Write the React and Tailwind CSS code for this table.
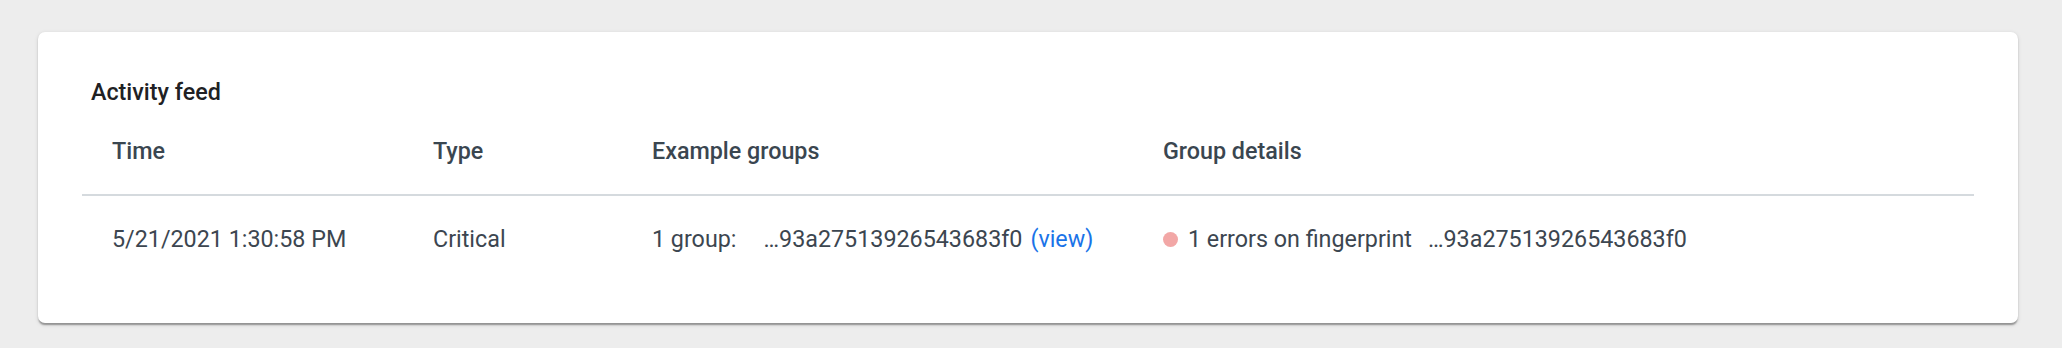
const rows = [
  {
    time: "5/21/2021 1:30:58 PM",
    type: "Critical",
    groups: "1 group:",
    hash: "…93a27513926543683f0",
    detail: "1 errors on fingerprint",
  },
];

export default function App() {
  return (
    <div className="min-h-screen bg-[#ededed] pl-[38px] pr-[44px] pt-[32px] font-['Roboto',sans-serif]">
      <div className="rounded-[7px] bg-white pt-[44px] pb-[41px] shadow-[0_3px_1.5px_-1.5px_rgba(0,0,0,0.2),0_1.5px_1.5px_0_rgba(0,0,0,0.14),0_1.5px_4.5px_0_rgba(0,0,0,0.12)]">
        <div className="pl-[53px] text-[23.3px] leading-[32px] font-medium text-[#202124]">Activity feed</div>

        <div className="mx-[44px]">
          {/* header */}
          <div className="grid h-[88px] grid-cols-[321px_219px_511px_1fr] items-center border-b-2 border-[#d5dade] text-[23.3px] font-medium text-[#3a4650]">
            <div className="pl-[30px]">Time</div>
            <div className="pl-[30px]">Type</div>
            <div className="pl-[30px]">Example groups</div>
            <div className="pl-[30px]">Group details</div>
          </div>

          {rows.map((r) => (
            <div key={r.time} className="grid h-[86px] grid-cols-[321px_219px_511px_1fr] items-center text-[23.3px] text-[#3c4650]">
              <div className="pl-[30px]">{r.time}</div>
              <div className="pl-[30px]">{r.type}</div>
              <div className="flex items-center pl-[30px] whitespace-nowrap">
                <span>{r.groups}</span>
                <span className="ml-[27px]">{r.hash}</span>
                <a className="ml-[8px] text-[#1a73e8]">(view)</a>
              </div>
              <div className="flex items-center pl-[30px] whitespace-nowrap">
                <span className="h-[15px] w-[15px] rounded-full bg-[#f2a7a6]"></span>
                <span className="ml-[10px]">{r.detail}</span>
                <span className="ml-[16px]">{r.hash}</span>
              </div>
            </div>
          ))}
        </div>
      </div>
    </div>
  );
}
